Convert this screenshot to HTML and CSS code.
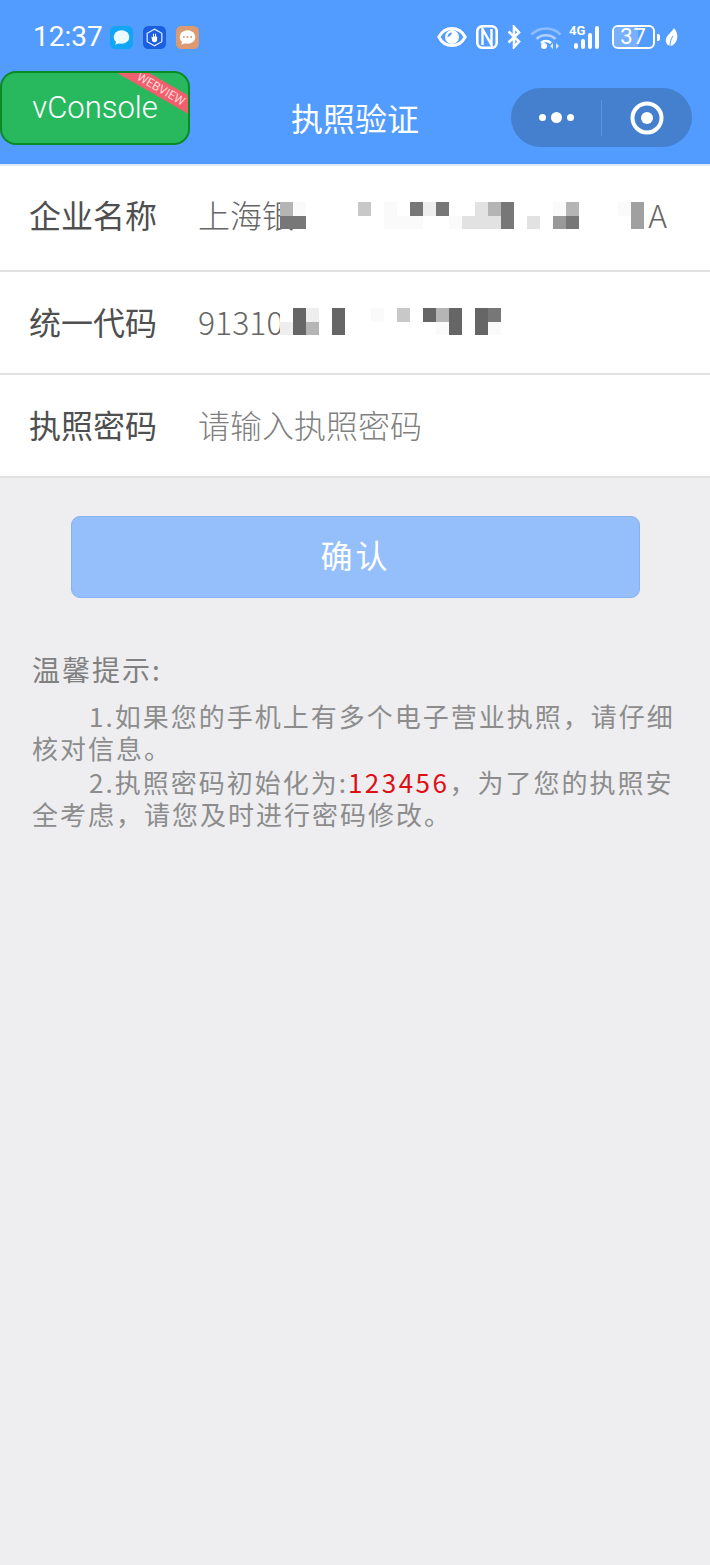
FILE: index.html
```html
<!DOCTYPE html>
<html lang="zh-CN">
<head>
    <meta charset="UTF-8">
    <meta name="viewport" content="width=device-width, initial-scale=1.0">
    <title>执照验证</title>
    <link rel="stylesheet" href="styles.css">
</head>
<body>
    <header class="top">
        <!-- status bar -->
        <div class="status">
            <span class="time">12:37</span>
            <div class="apps">
                <svg class="app" viewBox="0 0 22 22"><rect width="22" height="22" rx="5" fill="#12a5f5"/><ellipse cx="11" cy="10.500" rx="7.500" ry="6.500" fill="#eafaff"/><path d="M6 14l-1 4 5-2z" fill="#eafaff"/></svg>
                <svg class="app" viewBox="0 0 22 22"><rect width="22" height="22" rx="5" fill="#1b5fe0"/><path d="M11 3l7 4v8l-7 4-7-4V7z" fill="none" stroke="#dfe9ff" stroke-width="1.200"/><path d="M8 10l1.500 1V7.500h1V10h1V7.500h1V10l1 0v3a2.500 2.500 0 0 1-5 0z" fill="#fff"/></svg>
                <svg class="app" viewBox="0 0 22 22"><rect width="22" height="22" rx="5" fill="#dc9a72"/><ellipse cx="11" cy="10.500" rx="7.500" ry="6.500" fill="#fff"/><path d="M6 14l-1 4 5-2z" fill="#fff"/><circle cx="7.500" cy="10.500" r="1" fill="#dc9a72"/><circle cx="11" cy="10.500" r="1" fill="#dc9a72"/><circle cx="14.500" cy="10.500" r="1" fill="#dc9a72"/></svg>
            </div>
            <div class="indicators">
                <svg class="ic-eye" viewBox="0 0 30 22"><path d="M1.800 11C5 5 9.500 2.500 15 2.500S25 5 28.200 11C25 17 20.500 19.500 15 19.500S5 17 1.800 11z" fill="none" stroke="#fff" stroke-width="3"/><circle cx="15" cy="11" r="7" fill="#fff"/><path d="M10.500 11a4.500 4.500 0 0 1 4.500-4.500c-.5 2.500-2 4-4.500 4.500z" fill="#529bff"/></svg>
                <svg class="ic-nfc" viewBox="0 0 22 24"><rect x="1.300" y="1.300" width="19.400" height="21.400" rx="5" fill="none" stroke="#fff" stroke-width="2.600"/><path d="M6.500 20V4l9 16V4" fill="none" stroke="#fff" stroke-width="2.400"/></svg>
                <svg class="ic-bt" viewBox="0 0 14 24"><path d="M1.500 6.500L12 16.500 7 22V2l5 5.500L1.500 17.500" fill="none" stroke="#fff" stroke-width="2.600"/></svg>
                <svg class="ic-wifi" viewBox="0 0 32 24"><path d="M1.500 9.500C9.500 1.500 22.500 1.500 30.500 9.500" fill="none" stroke="#8fbdff" stroke-width="2.600"/><path d="M6.500 14c5-5 14-5 19 0" fill="none" stroke="#b0d0ff" stroke-width="2.600"/><path d="M11 18c3-2.500 7-2.500 10 0" fill="none" stroke="#fff" stroke-width="2.600"/><circle cx="14" cy="21" r="3" fill="#fff"/><path d="M23 18v6l-3-3zM26 18v6l3-3z" fill="#dbe9ff"/></svg>
                <span class="signal">
                    <span class="net">4G</span>
                    <svg class="ic-bars" viewBox="0 0 33 24"><rect x="5" y="18" width="4" height="6" rx="2" fill="#fff"/><rect x="12" y="14" width="4" height="10" rx="2" fill="#fff"/><rect x="19" y="8" width="4" height="16" rx="2" fill="#fff"/><rect x="26" y="1" width="4" height="23" rx="2" fill="#fff"/></svg>
                </span>
                <div class="battery"><span class="level"></span><span class="pct">37</span></div>
                <span class="nub"></span>
                <svg class="ic-leaf" viewBox="0 0 13 20"><path d="M9 1c3 4 4 7 3 11-1 4-4 7-7 7-3-1-5-4-4-7 1-4 5-6 8-11z" fill="#fff"/><path d="M5 19c0-4 1-7 3-10" fill="none" stroke="#529bff" stroke-width="1"/></svg>
            </div>
        </div>
        <!-- nav bar -->
        <div class="nav">
            <h1 class="title">执照验证</h1>
            <div class="capsule">
                <div class="more"><i></i><i class="big"></i><i></i></div>
                <span class="split"></span>
                <div class="home"><svg viewBox="0 0 34 34"><circle cx="17" cy="17" r="14.500" fill="none" stroke="#fff" stroke-width="4"/><circle cx="17" cy="17" r="6" fill="#fff"/></svg></div>
            </div>
        </div>
        <div class="vconsole">vConsole<span class="ribbon">WEBVIEW</span></div>
    </header>

    <form class="fields">
        <div class="row row-first">
            <label class="name">企业名称</label>
            <div class="value"><span>上海银</span><span>A</span></div>
            <div class="mosaic mosaic-a">
                <i class="e"></i><i class="a"></i><i></i><i></i><i></i><i></i><i class="d"></i><i></i><i class="a"></i><i></i><i class="h"></i><i class="b"></i><i class="h"></i><i></i>
                <i></i><i class="c"></i><i class="e"></i><i class="h"></i><i></i><i></i><i></i><i class="a"></i><i class="e"></i><i></i><i></i><i></i><i class="a"></i><i class="f"></i>
                <i class="h"></i><i class="h"></i><i></i><i></i><i></i><i></i><i></i><i></i><i class="a"></i><i class="a"></i><i class="a"></i><i></i><i></i><i class="a"></i>
                <i class="c"></i><i class="c"></i><i class="c"></i><i class="h"></i><i></i><i class="c"></i><i></i><i class="g"></i><i class="h"></i><i></i><i></i><i></i><i></i><i class="f"></i>
            </div>
        </div>
        <div class="row">
            <label class="name">统一代码</label>
            <div class="value"><span>91310</span></div>
            <div class="mosaic mosaic-b">
                <i></i><i class="k"></i><i class="b"></i><i></i><i class="k"></i><i></i><i></i><i class="a"></i><i></i><i class="d"></i><i></i><i class="k"></i><i class="e"></i><i class="k"></i><i></i><i class="k"></i><i class="h"></i>
                <i class="b"></i><i class="k"></i><i class="e"></i><i></i><i class="k"></i><i></i><i></i><i></i><i></i><i></i><i></i><i></i><i class="a"></i><i class="k"></i><i></i><i class="k"></i><i class="a"></i>
            </div>
        </div>
        <div class="row">
            <label class="name">执照密码</label>
            <div class="value placeholder"><span>请输入执照密码</span></div>
        </div>
    </form>

    <div class="actions">
        <button type="button" class="confirm">确认</button>
    </div>

    <div class="tips">
        <h2 class="tips-head">温馨提示:</h2>
        <p>1.如果您的手机上有多个电子营业执照&#xFF0C;请仔细核对信息。</p>
        <p>2.执照密码初始化为:<span class="code">123456</span>&#xFF0C;为了您的执照安全考虑&#xFF0C;请您及时进行密码修改。</p>
    </div>
</body>
</html>
```

FILE: styles.css
```css
* {
    box-sizing: border-box;
}
body {
    margin: 0;
    min-height: 1565px;
    background-color: #eeeef1;
    font-family: "Noto Sans CJK SC", "Noto Sans", sans-serif;
    font-weight: 300;
    overflow: hidden;
}

/* header */
.top {
    position: relative;
    height: 166px;
    background-color: #529bff;
    border-bottom: 2px solid #dfe8f5;
    color: white;
}
.status {
    display: flex;
    align-items: center;
    height: 72px;
    padding: 2px 32px 0 33px;
}
.time {
    font-family: Roboto, sans-serif;
    font-size: 28px;
    font-weight: 400;
    line-height: 72px;
    width: 77px;
}
.apps {
    display: flex;
    gap: 10px;
}
.app {
    width: 23px;
    height: 23px;
}
.indicators {
    display: flex;
    align-items: center;
    margin-left: auto;
}
.ic-eye {
    width: 30px;
    height: 22px;
}
.ic-nfc {
    width: 22px;
    height: 24px;
    margin-left: 9px;
}
.ic-bt {
    width: 14px;
    height: 24px;
    margin-left: 9px;
}
.ic-wifi {
    width: 32px;
    height: 24px;
    margin-left: 9px;
}
.signal {
    position: relative;
    width: 33px;
    height: 24px;
    margin-left: 7px;
}
.net {
    position: absolute;
    left: 0;
    top: -1px;
    font-family: Roboto, sans-serif;
    font-size: 13px;
    font-weight: 700;
    line-height: 13px;
}
.ic-bars {
    width: 33px;
    height: 24px;
    display: block;
}
.battery {
    position: relative;
    width: 43px;
    height: 24px;
    margin-left: 10px;
    border: 2px solid white;
    border-radius: 6px;
    overflow: hidden;
}
.level {
    display: block;
    width: 62%;
    height: 100%;
    background-color: #78b0ff;
}
.pct {
    position: absolute;
    inset: 0;
    text-align: center;
    font-family: Roboto, sans-serif;
    font-size: 22px;
    font-weight: 400;
    letter-spacing: 1px;
    line-height: 20px;
}
.nub {
    width: 3px;
    height: 7px;
    margin-left: 2px;
    background-color: white;
    border-radius: 0 2px 2px 0;
}
.ic-leaf {
    width: 13px;
    height: 20px;
    margin-left: 5px;
}
.nav {
    position: relative;
    display: flex;
    align-items: center;
    justify-content: center;
    height: 92px;
}
.title {
    margin: 0 0 2px;
    font-size: 32px;
    font-weight: 400;
    line-height: 90px;
}
.capsule {
    position: absolute;
    right: 18px;
    top: 16px;
    display: flex;
    align-items: center;
    width: 181px;
    height: 59px;
    background-color: #4480cd;
    border-radius: 30px;
}
.more {
    display: flex;
    align-items: center;
    justify-content: center;
    gap: 5px;
    width: 90px;
}
.more i {
    width: 7px;
    height: 7px;
    background-color: white;
    border-radius: 50%;
}
.more .big {
    width: 11px;
    height: 11px;
}
.split {
    width: 1px;
    height: 36px;
    background-color: #5d93d8;
}
.home {
    flex: 1;
    display: flex;
    justify-content: center;
}
.home svg {
    width: 34px;
    height: 34px;
}
.vconsole {
    position: absolute;
    left: 0;
    top: 71px;
    width: 190px;
    height: 74px;
    background-color: #28b95f;
    border: 2px solid #0a8a22;
    border-radius: 16px;
    font-family: Roboto, sans-serif;
    font-size: 31px;
    font-weight: 300;
    line-height: 70px;
    text-align: center;
    overflow: hidden;
}
.ribbon {
    position: absolute;
    left: 104px;
    top: 8px;
    width: 110px;
    height: 16px;
    background-color: #f0606c;
    color: #ffd9dc;
    font-size: 12px;
    font-weight: 400;
    line-height: 16px;
    text-align: center;
    transform: rotate(30deg);
}

/* form */
.fields {
    background-color: white;
}
.row {
    position: relative;
    display: flex;
    align-items: center;
    height: 103px;
    padding: 0 43px 4px 29px;
    border-bottom: 2px solid #e2e2e2;
    font-size: 32px;
}
.row-first {
    height: 106px;
    padding-bottom: 8px;
}
.name {
    width: 170px;
    color: #4f4f4f;
    font-weight: 400;
}
.value {
    flex: 1;
    display: flex;
    justify-content: space-between;
    color: #666;
    margin-left: -1px;
}
.placeholder {
    color: #808080;
}
.mosaic {
    position: absolute;
    top: 36px;
    display: grid;
    grid-auto-rows: 13.500px;
    background-color: white;
}
.mosaic-a {
    left: 280px;
    grid-template-columns: repeat(28, 13px);
}
.mosaic-b {
    left: 280px;
    grid-template-columns: repeat(17, 13px);
}
.mosaic .a { background-color: #fafafa; }
.mosaic .b { background-color: #eeeeee; }
.mosaic .c { background-color: #e2e2e2; }
.mosaic .d { background-color: #c8c8c8; }
.mosaic .e { background-color: #b5b5b5; }
.mosaic .f { background-color: #a0a0a0; }
.mosaic .g { background-color: #999999; }
.mosaic .h { background-color: #777777; }
.mosaic .k { background-color: #666666; }

/* button */
.actions {
    display: flex;
    justify-content: center;
    padding: 38px 70px 0 71px;
}
.confirm {
    width: 100%;
    height: 82px;
    padding: 0 0 6px;
    background-color: #94bffa;
    border: 1px solid #86b2f0;
    border-radius: 9px;
    color: white;
    font-family: inherit;
    font-size: 32px;
    font-weight: 400;
    letter-spacing: 3px;
}

/* tips */
.tips {
    margin-top: 51px;
    padding: 0 30px 0 32px;
    color: #8c8c8c;
    font-size: 26px;
    font-weight: 400;
    letter-spacing: 2px;
    line-height: 32px;
}
.tips-head {
    margin: 0 0 11px;
    font-size: 28px;
    font-weight: 400;
    line-height: 40px;
    color: #808080;
}
.tips p {
    margin: 0 0 2px;
    text-indent: 57px;
}
.code {
    color: #dd1016;
    letter-spacing: 2.500px;
}
```
